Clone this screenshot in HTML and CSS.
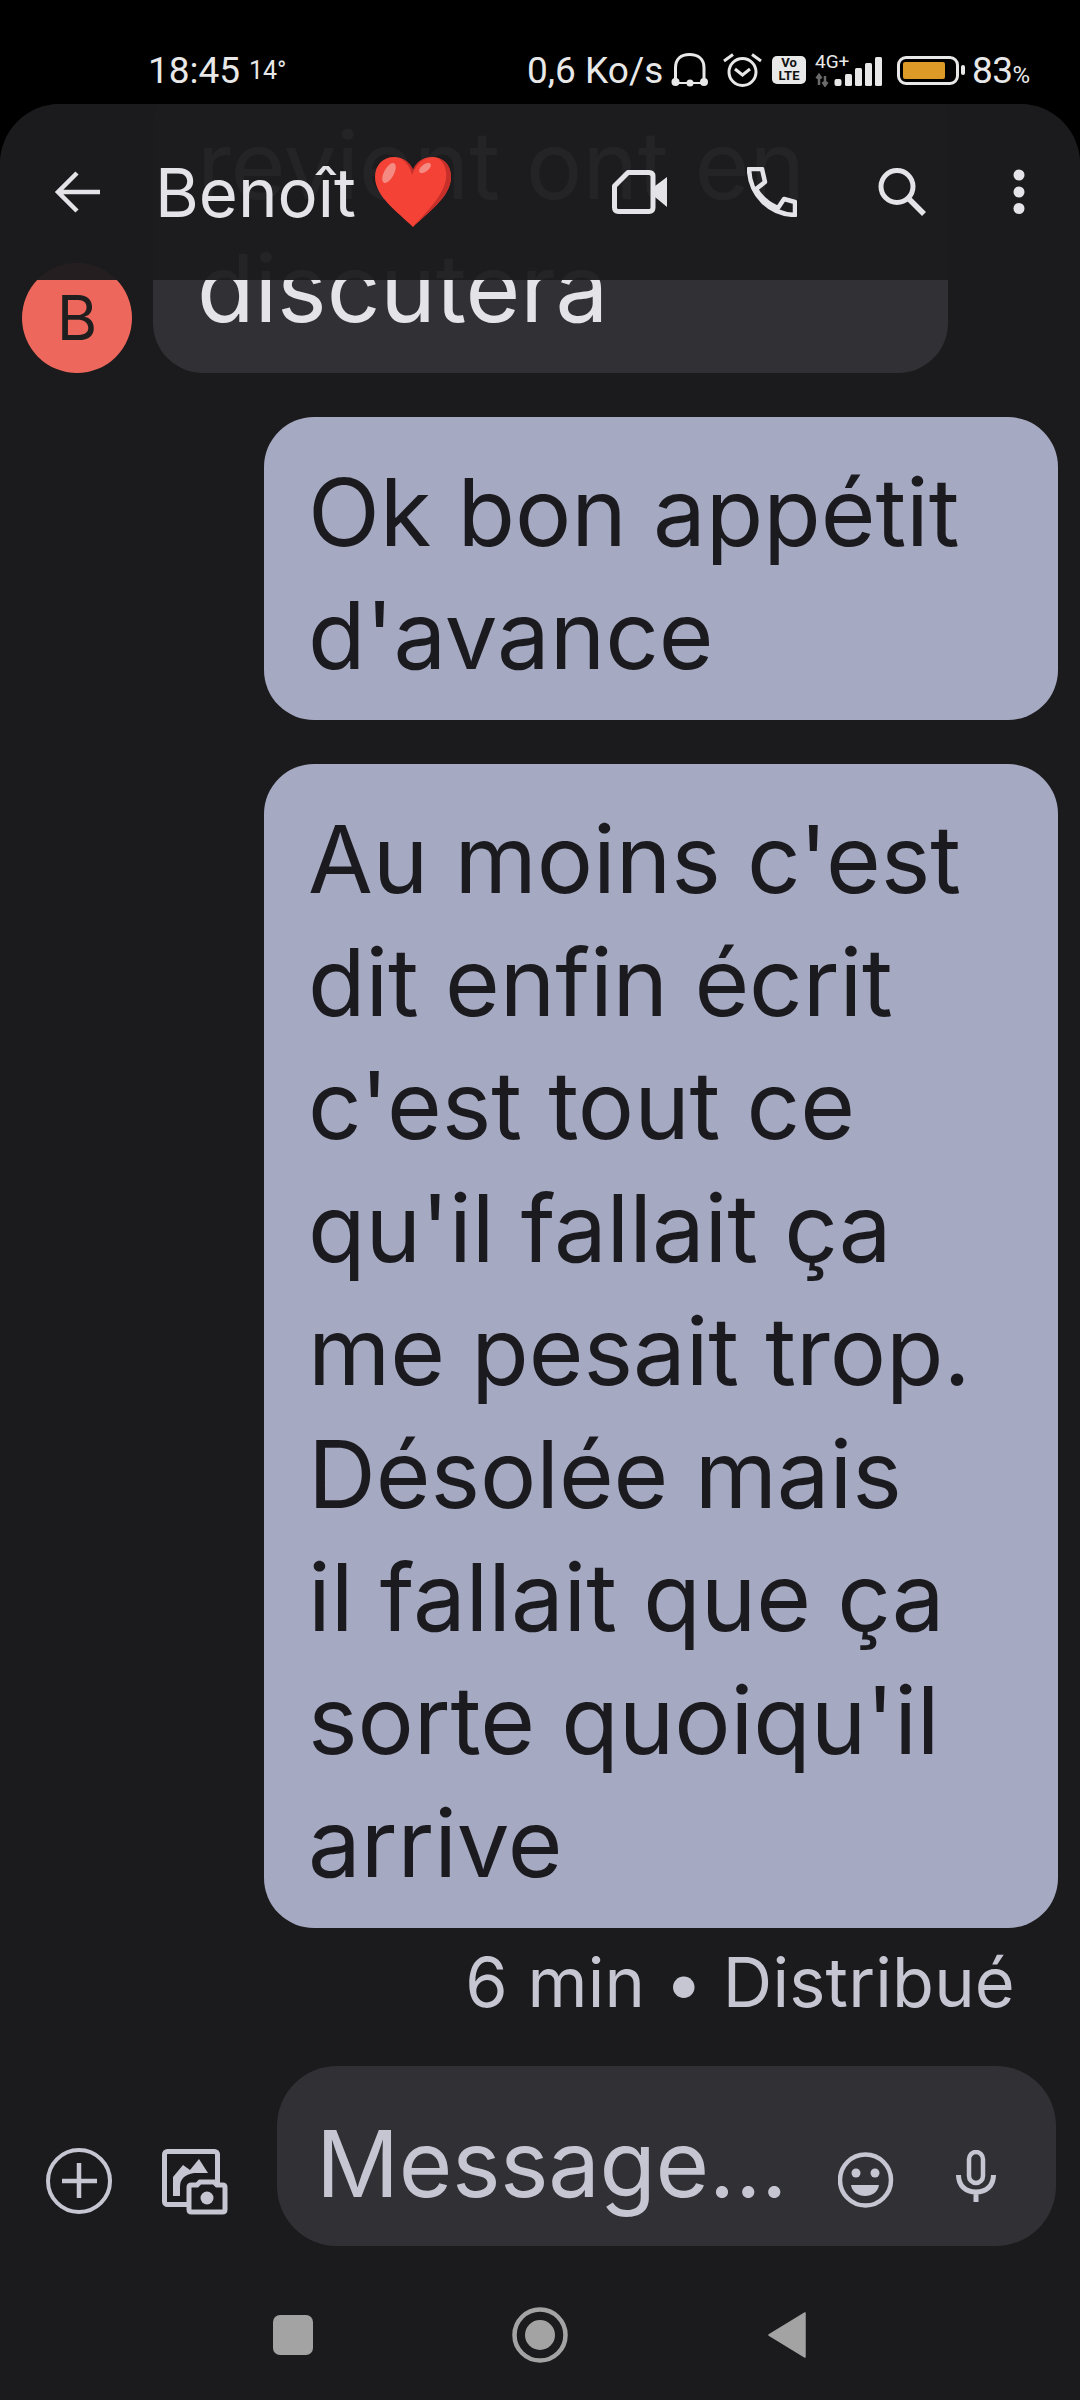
FILE: index.html
```html
<!DOCTYPE html>
<html lang="fr">
<head>
	<meta charset="utf-8">
	<title>Benoît</title>
	<link rel="stylesheet" href="styles.css">
</head>
<body>
	<div class="status">
		<span class="time">18:45</span>
		<span class="temp">14°</span>
		<span class="speed">0,6 Ko/s</span>
		<svg class="ic-phones" width="38" height="34" viewBox="0 0 38 34"><path d="M4.500 28V15C4.500 6 10 1.500 18.500 1.500S33 6 33 15V28" fill="none" stroke="#e8e8e8" stroke-width="3"/><circle cx="4.500" cy="29" r="4" fill="#e8e8e8"/><circle cx="33" cy="29" r="4" fill="#e8e8e8"/><path d="M6 30H31" stroke="#e8e8e8" stroke-width="2"/><circle cx="19" cy="30" r="3.500" fill="#e8e8e8"/></svg>
		<svg class="ic-alarm" width="40" height="36" viewBox="0 0 40 36"><circle cx="19.500" cy="20" r="13.500" fill="none" stroke="#e8e8e8" stroke-width="3"/><path d="M12 17L19.500 23L27 17" fill="none" stroke="#e8e8e8" stroke-width="3"/><path d="M1 9L10 2.500M38 9L29 2.500" stroke="#e8e8e8" stroke-width="3"/></svg>
		<span class="volte">Vo<br>LTE</span>
		<div class="signal">
			<span class="net">4G+</span>
			<svg width="68" height="33" viewBox="0 0 68 33"><path d="M5 22V31M2.500 24.500L5 21L7.500 24.500M11 22V31M8.500 28L11 31.500L13.500 28" fill="none" stroke="#6a6a6a" stroke-width="2.500"/><g fill="#e8e8e8"><rect x="20.500" y="25" width="7" height="7" rx="2"/><rect x="31" y="20" width="7" height="12" rx="1.500"/><rect x="41" y="14" width="7" height="18" rx="1.500"/><rect x="51" y="9" width="7" height="23" rx="1.500"/><rect x="61" y="3" width="7" height="29" rx="1.500"/></g></svg>
		</div>
		<div class="battery"><div class="battery-fill"></div></div>
		<div class="battery-nub"></div>
		<span class="pct">83<small>%</small></span>
	</div>

	<div class="panel">
		<div class="thread">
			<div class="row-in">
				<div class="avatar">B</div>
				<div class="bubble bubble-in">revient ont en<br>discutera</div>
			</div>
			<div class="bubble bubble-out">Ok bon appétit<br>d'avance</div>
			<div class="bubble bubble-out">Au moins c'est<br>dit enfin écrit<br>c'est tout ce<br>qu'il fallait ça<br>me pesait trop.<br>Désolée mais<br>il fallait que ça<br>sorte quoiqu'il<br>arrive</div>
			<div class="stamp">6 min • Distribué</div>
		</div>

		<div class="topbar">
			<svg class="ic-back" width="46" height="44" viewBox="0 0 46 44"><path d="M46 22H4M23 3L4 22L23 41" fill="none" stroke="#e3e3e8" stroke-width="4.500"/></svg>
			<div class="name">Benoît</div>
			<svg class="ic-heart" width="76" height="70" viewBox="0 0 76 70"><path d="M38 70C24 56 0 40 0 20C0 8 8 0 19 0C28 0 34 5 38 13C42 5 48 0 57 0C68 0 76 8 76 20C76 40 52 56 38 70Z" fill="#f44336"/><path d="M38 70C52 56 76 40 76 20C76 10 71 3 63 1C70 6 72 14 71 22C68 40 50 56 38 70Z" fill="#c62f2a"/><path d="M26 2C30 4 35 9 37 18C41 9 45 4 50 2C44 3 40 7 38 13C36 7 32 3 26 2Z" fill="#c62f2a"/><ellipse cx="14" cy="16" rx="5" ry="11" transform="rotate(28 14 16)" fill="#f58a82"/><ellipse cx="50" cy="11" rx="7" ry="3.500" transform="rotate(-38 50 11)" fill="#f58a82"/></svg>
			<svg class="ic-video" width="56" height="44" viewBox="0 0 56 44"><path d="M16 2.500H37Q41 2.500 41 6.500V37.500Q41 41.500 37 41.500H6.500Q2.500 41.500 2.500 37.500V16Z" fill="none" stroke="#e3e3e8" stroke-width="5" stroke-linejoin="round"/><path d="M43 16L55 7V37L43 27Z" fill="#e3e3e8"/></svg>
			<svg class="ic-call" width="50" height="50" viewBox="0 0 50 50"><path d="M2 2H15L18 15L9 22C14 31 21 37 31 41L37 32L48 35V48C22 47 3 28 2 2Z" fill="none" stroke="#e3e3e8" stroke-width="4.500" stroke-linejoin="round"/></svg>
			<svg class="ic-search" width="48" height="48" viewBox="0 0 48 48"><circle cx="19" cy="18.500" r="16" fill="none" stroke="#e3e3e8" stroke-width="5"/><path d="M30 30L46 46" stroke="#e3e3e8" stroke-width="5.500"/></svg>
			<svg class="ic-more" width="12" height="46" viewBox="0 0 12 46"><circle cx="6" cy="6" r="5.500" fill="#e3e3e8"/><circle cx="6" cy="23" r="5.500" fill="#e3e3e8"/><circle cx="6" cy="39.500" r="5.500" fill="#e3e3e8"/></svg>
		</div>

		<div class="composer">
			<svg class="ic-plus" width="66" height="66" viewBox="0 0 66 66"><circle cx="33" cy="33" r="31" fill="none" stroke="#c5c6d2" stroke-width="4"/><path d="M33 15V50M16 33H51" stroke="#c5c6d2" stroke-width="4.500"/></svg>
			<svg class="ic-gallery" width="66" height="66" viewBox="0 0 66 66"><rect x="2.500" y="2.500" width="53" height="53" rx="3" fill="none" stroke="#c5c6d2" stroke-width="5"/><path d="M11 47V28L21 16L28 21L37 10L46 24H32Q18 26 18 38V47Z" fill="#c5c6d2"/><path d="M27 38Q27 36 29 36H34L38 29H52L56 36H61Q63 36 63 38V60Q63 63 61 63H29Q27 63 27 60Z" fill="#1b1b1d"/><path d="M27 38.500Q27 36 29.500 36H35L38 33H52L55 36H60.500Q63 36 63 38.500V60.500Q63 63 60.500 63H29.500Q27 63 27 60.500Z" fill="none" stroke="#c5c6d2" stroke-width="5"/><circle cx="45" cy="49" r="6.500" fill="#c5c6d2"/></svg>
			<div class="input">
				<span class="hint">Message...</span>
				<svg class="ic-smile" width="56" height="56" viewBox="0 0 56 56"><circle cx="27.500" cy="28" r="25.500" fill="none" stroke="#c5c6d2" stroke-width="4.500"/><circle cx="18" cy="21" r="4.500" fill="#c5c6d2"/><circle cx="37" cy="21" r="4.500" fill="#c5c6d2"/><path d="M13 33H41C40 40 34 44 27 44S14 40 13 33Z" fill="#c5c6d2"/></svg>
				<svg class="ic-mic" width="40" height="54" viewBox="0 0 40 54"><rect x="13" y="2" width="14" height="31" rx="7" fill="none" stroke="#c5c6d2" stroke-width="4.500"/><path d="M2.500 25C2.500 36 10 42 20 42S37.500 36 37.500 25M20 42V52" fill="none" stroke="#c5c6d2" stroke-width="5"/></svg>
			</div>
		</div>

		<div class="nav">
			<div class="nav-square"></div>
			<svg class="nav-home" width="56" height="56" viewBox="0 0 56 56"><circle cx="28" cy="28" r="25.500" fill="none" stroke="#a3a3a3" stroke-width="4.500"/><circle cx="28" cy="28" r="15" fill="#a3a3a3"/></svg>
			<svg class="nav-back" width="38" height="46" viewBox="0 0 38 46"><path d="M37 1V45L1 23Z" fill="#a3a3a3" stroke="#a3a3a3" stroke-width="1.500" stroke-linejoin="round"/></svg>
		</div>
	</div>
</body>
</html>
```
FILE: styles.css
```css
html, body {
	margin: 0;
	padding: 0;
}

body {
	width: 1080px;
	height: 2400px;
	background: #000;
	font-family: "Inter", "Liberation Sans", sans-serif;
	display: flex;
	flex-direction: column;
	overflow: hidden;
}

svg {
	display: block;
	flex-shrink: 0;
}

/* status bar */
.status {
	height: 104px;
	box-sizing: border-box;
	flex-shrink: 0;
	display: flex;
	align-items: center;
	padding: 36px 0 0 148px;
	color: #e8e8e8;
	font-family: "Roboto", sans-serif;
}

.time {
	width: 93px;
	font-size: 37px;
}

.temp {
	width: 36px;
	margin-left: 8px;
	font-size: 25px;
}

.speed {
	width: 136px;
	margin-left: 242px;
	font-size: 37px;
	white-space: nowrap;
}

.ic-phones {
	margin-left: 8px;
}

.ic-alarm {
	margin-left: 14px;
}

.volte {
	width: 34px;
	height: 28px;
	margin-left: 9px;
	background: #e8e8e8;
	border-radius: 5px;
	color: #111;
	font-size: 13px;
	font-weight: 700;
	line-height: 13px;
	text-align: center;
}

.signal {
	width: 68px;
	height: 33px;
	margin-left: 8px;
	position: relative;
}

.net {
	position: absolute;
	left: 1px;
	top: -3px;
	font-size: 19px;
	line-height: 22px;
}

.battery {
	width: 62px;
	height: 29px;
	box-sizing: border-box;
	margin-left: 15px;
	border: 3px solid #e8e8e8;
	border-radius: 9px;
	padding: 3px;
}

.battery-fill {
	width: 42px;
	height: 17px;
	background: #de9a27;
	border-radius: 2px;
}

.battery-nub {
	width: 4px;
	height: 10px;
	margin-left: 2px;
	background: #e8e8e8;
	border-radius: 2px;
}

.pct {
	margin-left: 7px;
	font-size: 37px;
	letter-spacing: -0.5px;
}

.pct small {
	font-size: 24px;
}

/* conversation panel */
.panel {
	flex: 1;
	min-height: 0;
	position: relative;
	display: flex;
	flex-direction: column;
	background: #1b1b1d;
	border-radius: 60px 60px 0 0;
	overflow: hidden;
}

.thread {
	flex: 1;
	min-height: 0;
	display: flex;
	flex-direction: column;
	justify-content: flex-end;
	gap: 44px;
	overflow: hidden;
}

.row-in {
	flex-shrink: 0;
	display: flex;
	align-items: flex-end;
	gap: 21px;
	padding-left: 22px;
}

.avatar {
	width: 110px;
	height: 110px;
	border-radius: 50%;
	background: #ee675c;
	color: #1f1f1f;
	font-size: 62px;
	line-height: 110px;
	text-align: center;
	flex-shrink: 0;
}

.bubble {
	flex-shrink: 0;
	box-sizing: border-box;
	width: 795px;
	padding: 34px 0 23px 44px;
	border-radius: 50px;
	font-size: 94px;
	line-height: 123px;
	letter-spacing: -0.1px;
	white-space: nowrap;
}

.bubble-in {
	background: #303035;
	color: #e3e3e8;
}

.bubble-out {
	align-self: flex-end;
	width: 794px;
	margin-right: 22px;
	background: #a5a9c2;
	color: #1b1b1f;
}

.stamp {
	flex-shrink: 0;
	margin-top: -44px;
	height: 138px;
	padding-top: 15px;
	box-sizing: border-box;
	padding-right: 65px;
	text-align: right;
	color: #c5c6d2;
	font-size: 68.5px;
	line-height: 80px;
	letter-spacing: 0.2px;
}

/* header floats over the thread, so the text scrolling under it stays faintly visible */
.topbar {
	position: absolute;
	top: 0;
	left: 0;
	right: 0;
	height: 176px;
	display: flex;
	align-items: center;
	background: rgba(27, 27, 29, 0.955);
}

.ic-back {
	margin-left: 54px;
}

.name {
	width: 198px;
	margin-left: 55px;
	color: #e3e3e8;
	font-size: 67px;
	white-space: nowrap;
}

.ic-heart {
	margin-left: 22px;
}

.ic-video {
	margin-left: auto;
}

.ic-call {
	margin-left: 79px;
}

.ic-search {
	margin-left: 81px;
}

.ic-more {
	margin-left: 87px;
	margin-right: 55px;
}

/* bottom bar */
.composer {
	height: 180px;
	flex-shrink: 0;
	display: flex;
	align-items: flex-end;
	padding-left: 46px;
}

.ic-plus {
	margin-bottom: 32px;
}

.ic-gallery {
	margin-left: 50px;
	margin-bottom: 31px;
}

.input {
	width: 779px;
	height: 180px;
	margin-left: 49px;
	display: flex;
	align-items: center;
	background: #303035;
	border-radius: 60px;
	color: #c5c6d2;
}

.hint {
	margin-left: 39px;
	margin-top: 15px;
	font-size: 92px;
	letter-spacing: -0.4px;
	white-space: nowrap;
}

.ic-smile {
	margin-left: auto;
	margin-top: 48px;
}

.ic-mic {
	margin-left: 62px;
	margin-right: 60px;
	margin-top: 42px;
}

.nav {
	height: 154px;
	flex-shrink: 0;
	display: flex;
	align-items: center;
	padding: 24px 0 0 273px;
	box-sizing: border-box;
}

.nav-square {
	width: 40px;
	height: 40px;
	border-radius: 7px;
	background: #a3a3a3;
}

.nav-home {
	margin-left: 199px;
}

.nav-back {
	margin-left: 200px;
}
```
